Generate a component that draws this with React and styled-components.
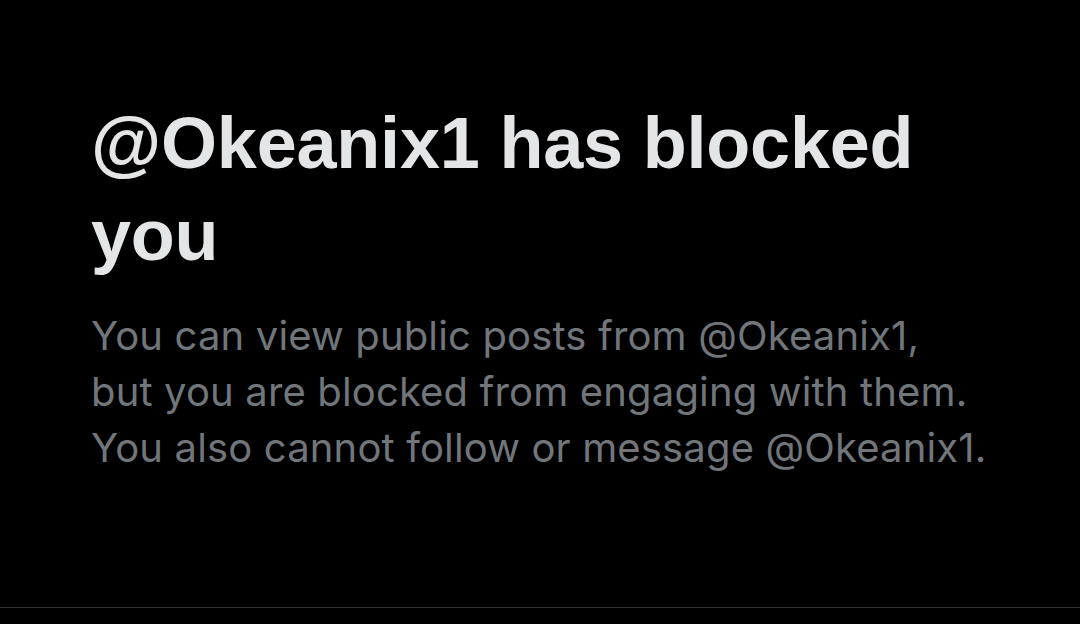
import React from "react";
import styled, { createGlobalStyle } from "styled-components";

const Global = createGlobalStyle`
  html, body { margin: 0; padding: 0; background: #000; }
  #root { min-height: 624px; }
`;

const Page = styled.div`
  width: 1080px;
  height: 624px;
  background: #000;
  display: flex;
  flex-direction: column;
`;

const Section = styled.section`
  height: 608px;
  box-sizing: border-box;
  border-bottom: 1px solid #2f3336;
  padding: 97px 80px 0 91px;
`;

const Title = styled.h1`
  margin: 0;
  font-family: "Liberation Sans", Arial, sans-serif;
  font-weight: 700;
  font-size: 72px;
  line-height: 92px;
  color: #e3e5e6;
  letter-spacing: -0.2px;
  max-width: 860px;
`;

const Body = styled.p`
  margin: 27px 0 0;
  font-family: Inter, "Noto Sans", sans-serif;
  font-weight: 400;
  font-size: 40px;
  line-height: 56px;
  letter-spacing: 0.15px;
  color: #71767b;
  max-width: 940px;
`;

export default function App() {
  return (
    <Page>
      <Global />
      <Section>
        <Title>@Okeanix1 has blocked you</Title>
        <Body>
          You can view public posts from @Okeanix1,
          <br />
          but you are blocked from engaging with them.
          <br />
          You also cannot follow or message @Okeanix1.
        </Body>
      </Section>
    </Page>
  );
}
